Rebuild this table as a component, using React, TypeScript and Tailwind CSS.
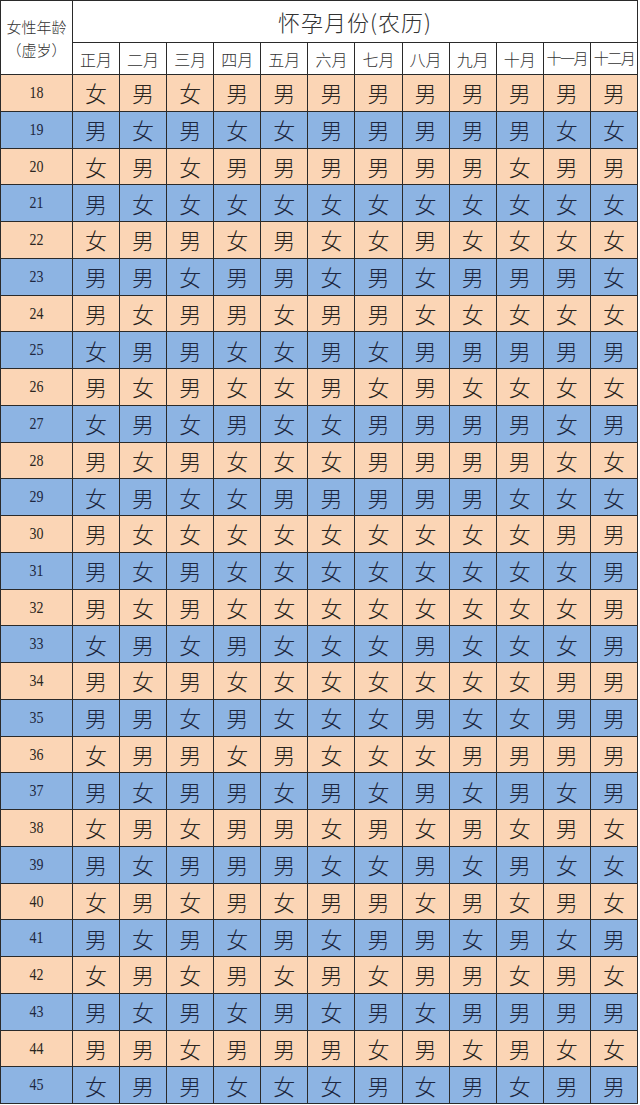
import React from "react";

const rows: [number, string][] = [
  [18, "FNFNNNNNNNNN"],
  [19, "NFNFFNNNNNFF"],
  [20, "FNFNNNNNNFNN"],
  [21, "NFFFFFFFFFFF"],
  [22, "FNNFNFFNFFFF"],
  [23, "NNFNNFNFNNNF"],
  [24, "NFNNFNNFFFFF"],
  [25, "FNNFFNFNNNNN"],
  [26, "NFNFFNFNFFFF"],
  [27, "FNFNFFNNNNFN"],
  [28, "NFNFFFNNNNFF"],
  [29, "FNFFNNNNNFFF"],
  [30, "NFFFFFFFFFNN"],
  [31, "NFNFFFFFFFFN"],
  [32, "NFNFFFFFFFFN"],
  [33, "FNFNFFFNFFFN"],
  [34, "NFNFFFFFFFNN"],
  [35, "NNFNFFFNFFNN"],
  [36, "FNNFNFFFNNNN"],
  [37, "NFNNFNFNFNFN"],
  [38, "FNFNNFNFNFNF"],
  [39, "NFNNNFFNFNFF"],
  [40, "FNFNFNNFNFNF"],
  [41, "NFNFNFNNFNFN"],
  [42, "FNFNFNFNNFNF"],
  [43, "NFNFNFNFNNNN"],
  [44, "NNFNNNFNFNFF"],
  [45, "FNNFFFNFNFNN"],
];

const months = ["正月", "二月", "三月", "四月", "五月", "六月", "七月", "八月", "九月", "十月", "十一月", "十二月"];

const cjk = { fontFamily: '"Noto Sans CJK SC", "Noto Sans", sans-serif' };
const serif = { fontFamily: '"Liberation Serif", "DejaVu Serif", serif' };

export default function App() {
  return (
    <div className="w-[640px] h-[1105px] bg-white">
      <div
        className="w-[638px] grid grid-cols-[71px_repeat(12,1fr)] grid-rows-[41px_31px_repeat(28,35.75px)] gap-px bg-[#2a2a2a] p-px"
        style={cjk}
      >
        <div className="row-span-2 bg-white flex flex-col items-center justify-center text-[15px] leading-[23px] text-[#333] font-light">
          <span>女性年龄</span>
          <span>（虚岁）</span>
        </div>
        <div className="col-span-12 bg-white flex items-center justify-center text-[22px] text-[#333] font-light tracking-[1px]">
          怀孕月份(农历)
        </div>
        {months.map((m) => (
          <div
            key={m}
            className={`bg-white flex items-center justify-center text-[#333] font-light whitespace-nowrap ${
              m.length > 2 ? "text-[15px] tracking-[-1.5px]" : "text-[16px]"
            }`}
          >
            {m}
          </div>
        ))}
        {rows.map(([age, s], i) => {
          const blue = i % 2 === 1;
          const bg = blue ? "bg-[#8db4e3]" : "bg-[#fbd5b5]";
          const fg = blue ? "text-[#1d2740]" : "text-[#2a2520]";
          return (
            <React.Fragment key={age}>
              <div className={`${bg} ${fg} flex items-center justify-center text-[17px]`} style={serif}>
                <span className="inline-block scale-x-[0.82]">{age}</span>
              </div>
              {s.split("").map((c, j) => (
                <div
                  key={j}
                  className={`${bg} ${fg} flex items-center justify-center text-[22px] font-light`}
                >
                  {c === "N" ? "男" : "女"}
                </div>
              ))}
            </React.Fragment>
          );
        })}
      </div>
    </div>
  );
}
